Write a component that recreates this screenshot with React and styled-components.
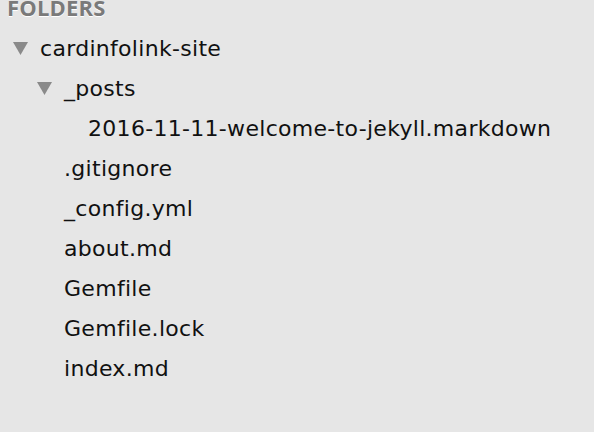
import React from 'react';
import styled, { createGlobalStyle } from 'styled-components';

const GlobalStyle = createGlobalStyle`
  html, body {
    margin: 0;
    padding: 0;
    background: #e6e6e6;
  }
`;

const Sidebar = styled.div`
  width: 594px;
  height: 432px;
  overflow: hidden;
  background: #e6e6e6;
  font-family: "DejaVu Sans", "Liberation Sans", sans-serif;
  color: #111;
`;

const Header = styled.div`
  font-family: "Open Sans", "DejaVu Sans", sans-serif;
  font-weight: 700;
  font-size: 22px;
  line-height: 22px;
  letter-spacing: 0.2px;
  color: #7a7a7a;
  text-shadow: 0 1px 0 #fff;
  padding-left: 7px;
  margin-top: -4px;
  height: 32px;
`;

const Tree = styled.ul`
  list-style: none;
  margin: 0;
  padding: 0;
`;

const Row = styled.li`
  display: flex;
  align-items: center;
  height: 40px;
  padding-left: ${p => 13 + p.$depth * 24}px;
  font-size: 22px;
  letter-spacing: 0.3px;
  white-space: nowrap;
`;

const Arrow = styled.span`
  width: 15px;
  height: 13px;
  margin-right: 12px;
  display: flex;
  svg { display: block; }
`;

const Label = styled.span`
  padding-left: ${p => (p.$leaf ? 27 : 0)}px;
`;

const items = [
  { name: 'cardinfolink-site', depth: 0, folder: true },
  { name: '_posts', depth: 1, folder: true },
  { name: '2016-11-11-welcome-to-jekyll.markdown', depth: 2 },
  { name: '.gitignore', depth: 1 },
  { name: '_config.yml', depth: 1 },
  { name: 'about.md', depth: 1 },
  { name: 'Gemfile', depth: 1 },
  { name: 'Gemfile.lock', depth: 1 },
  { name: 'index.md', depth: 1 },
];

const Triangle = () => (
  <svg width="15" height="13" viewBox="0 0 15 13">
    <polygon points="0,0 15,0 7.5,13" fill="#8a8a8a" />
  </svg>
);

export default function App() {
  return (
    <Sidebar>
      <GlobalStyle />
      <Header>FOLDERS</Header>
      <Tree>
        {items.map(it => (
          <Row key={it.name} $depth={it.depth}>
            {it.folder && (
              <Arrow><Triangle /></Arrow>
            )}
            <Label $leaf={!it.folder}>{it.name}</Label>
          </Row>
        ))}
      </Tree>
    </Sidebar>
  );
}
